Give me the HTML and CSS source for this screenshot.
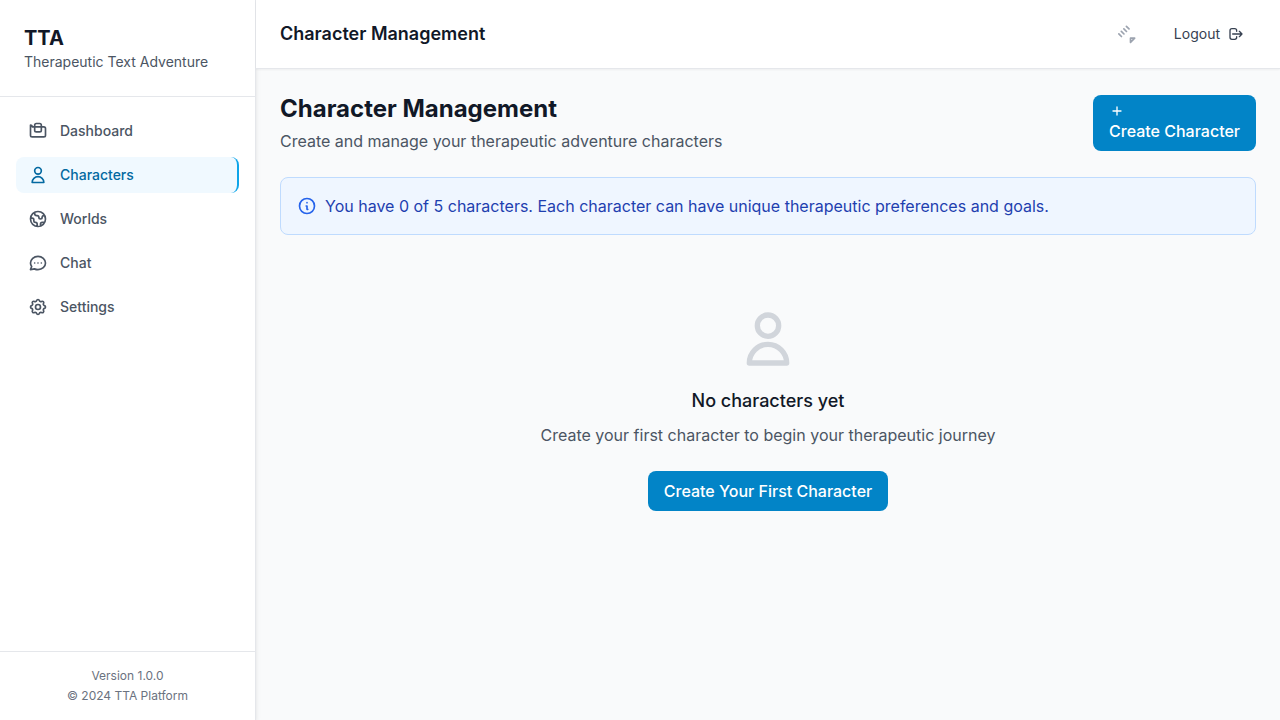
FILE: index.html
```html
<!DOCTYPE html>
<html lang="en">
<head>
<meta charset="utf-8">
<title>TTA - Character Management</title>
<link rel="stylesheet" href="styles.css">
</head>
<body>
<div class="app">
  <aside class="sidebar">
    <div class="brand">
      <h1 class="brand-name">TTA</h1>
      <p class="brand-tagline">Therapeutic Text Adventure</p>
    </div>
    <nav class="nav">
      <a class="nav-item"><svg class="icon" viewBox="0 0 24 24"><path d="M3 7v10a2 2 0 002 2h14a2 2 0 002-2V9a2 2 0 00-2-2H5a2 2 0 00-2-2z"/><path d="M8 5a2 2 0 012-2h4a2 2 0 012 2v6a2 2 0 01-2 2H10a2 2 0 01-2-2V5z"/></svg>Dashboard</a>
      <a class="nav-item active"><svg class="icon" viewBox="0 0 24 24"><path d="M16 7a4 4 0 11-8 0 4 4 0 018 0zM12 14a7 7 0 00-7 7h14a7 7 0 00-7-7z"/></svg>Characters</a>
      <a class="nav-item"><svg class="icon" viewBox="0 0 24 24"><path d="M3.055 11H5a2 2 0 012 2v1a2 2 0 002 2 2 2 0 012 2v2.945M8 3.935V5.5A2.5 2.5 0 0010.5 8h.5a2 2 0 012 2 2 2 0 104 0 2 2 0 012-2h1.064M15 20.488V18a2 2 0 012-2h3.064M21 12a9 9 0 11-18 0 9 9 0 0118 0z"/></svg>Worlds</a>
      <a class="nav-item"><svg class="icon" viewBox="0 0 24 24"><path d="M8 12h.01M12 12h.01M16 12h.01M21 12c0 4.418-4.03 8-9 8a9.863 9.863 0 01-4.255-.949L3 20l1.395-3.72C3.512 15.042 3 13.574 3 12c0-4.418 4.03-8 9-8s9 3.582 9 8z"/></svg>Chat</a>
      <a class="nav-item"><svg class="icon" viewBox="0 0 24 24"><path d="M10.325 4.317c.426-1.756 2.924-1.756 3.35 0a1.724 1.724 0 002.573 1.066c1.543-.94 3.31.826 2.37 2.37a1.724 1.724 0 001.065 2.572c1.756.426 1.756 2.924 0 3.35a1.724 1.724 0 00-1.066 2.573c.94 1.543-.826 3.31-2.37 2.37a1.724 1.724 0 00-2.572 1.065c-.426 1.756-2.924 1.756-3.35 0a1.724 1.724 0 00-2.573-1.066c-1.543.94-3.31-.826-2.37-2.37a1.724 1.724 0 00-1.065-2.572c-1.756-.426-1.756-2.924 0-3.35a1.724 1.724 0 001.066-2.573c-.94-1.543.826-3.31 2.37-2.37.996.608 2.296.07 2.572-1.065z"/><path d="M15 12a3 3 0 11-6 0 3 3 0 016 0z"/></svg>Settings</a>
    </nav>
    <footer class="sidebar-footer">
      <p>Version 1.0.0</p>
      <p>© 2024 TTA Platform</p>
    </footer>
  </aside>
  <div class="page">
    <header class="topbar">
      <h2 class="topbar-title">Character Management</h2>
      <div class="topbar-actions">
        <button class="notify" aria-label="Notifications"><svg class="icon" viewBox="0 0 24 24"><path d="M15 17h5l-5 5v-5zM10.07 2.82l3.12 3.12M7.05 5.84l3.12 3.12M4.03 8.86l3.12 3.12M1.01 11.88l3.12 3.12"/></svg></button>
        <button class="logout">Logout<svg class="icon small" viewBox="0 0 24 24"><path d="M17 16l4-4m0 0l-4-4m4 4H7m6 4v1a3 3 0 01-3 3H6a3 3 0 01-3-3V7a3 3 0 013-3h4a3 3 0 013 3v1"/></svg></button>
      </div>
    </header>
    <main class="content">
      <div class="heading">
        <div>
          <h1 class="title">Character Management</h1>
          <p class="subtitle">Create and manage your therapeutic adventure characters</p>
        </div>
        <button class="primary"><svg class="icon small" viewBox="0 0 24 24"><path d="M12 6v6m0 0v6m0-6h6m-6 0H6"/></svg>Create Character</button>
      </div>
      <div class="notice">
        <svg class="icon notice-icon" viewBox="0 0 24 24"><path d="M13 16h-1v-4h-1m1-4h.01M21 12a9 9 0 11-18 0 9 9 0 0118 0z"/></svg>
        <span>You have 0 of 5 characters. Each character can have unique therapeutic preferences and goals.</span>
      </div>
      <section class="empty">
        <svg class="icon large" viewBox="0 0 24 24"><path d="M16 7a4 4 0 11-8 0 4 4 0 018 0zM12 14a7 7 0 00-7 7h14a7 7 0 00-7-7z"/></svg>
        <h3 class="empty-title">No characters yet</h3>
        <p class="empty-text">Create your first character to begin your therapeutic journey</p>
        <button class="primary">Create Your First Character</button>
      </section>
    </main>
  </div>
</div>
</body>
</html>
```

FILE: styles.css
```css
* { box-sizing: border-box; margin: 0; padding: 0; }
body { font-family: Inter, sans-serif; font-size: 16px; line-height: 24px; color: #111827; background: #f9fafb; }
button { font: inherit; border: 0; background: transparent; text-align: left; }
.app { display: flex; height: 100vh; overflow: hidden; }
.icon { display: block; flex-shrink: 0; width: 20px; height: 20px; fill: none; stroke: currentColor; stroke-width: 2; stroke-linecap: round; stroke-linejoin: round; }
.icon.small { width: 16px; height: 16px; }
.icon.large { width: 64px; height: 64px; color: #d1d5db; }

.sidebar { display: flex; flex-direction: column; width: 256px; background: #fff; border-right: 1px solid #e5e7eb; box-shadow: 0 4px 6px -1px rgba(0, 0, 0, .1), 0 2px 4px -1px rgba(0, 0, 0, .06); }
.brand { padding: 24px; border-bottom: 1px solid #e5e7eb; }
.brand-name { font-size: 20px; line-height: 28px; font-weight: 700; }
.brand-tagline { font-size: 14px; line-height: 20px; color: #4b5563; }
.nav { flex: 1; display: flex; flex-direction: column; gap: 8px; padding: 16px; }
.nav-item { display: flex; align-items: center; gap: 12px; height: 36px; padding: 8px 12px; border-radius: 8px; font-size: 14px; line-height: 20px; font-weight: 500; color: #4b5563; }
.nav-item.active { background: #f0f9ff; color: #0369a1; border-right: 2px solid #0ea5e9; }
.sidebar-footer { padding: 16px; border-top: 1px solid #e5e7eb; display: flex; flex-direction: column; gap: 4px; text-align: center; font-size: 12px; line-height: 16px; color: #6b7280; }

.page { flex: 1; display: flex; flex-direction: column; }
.topbar { display: flex; align-items: center; justify-content: space-between; height: 69px; padding: 0 24px; background: #fff; border-bottom: 1px solid #e5e7eb; box-shadow: 0 1px 2px rgba(0, 0, 0, .05); }
.topbar-title { font-size: 18px; line-height: 28px; font-weight: 600; }
.topbar-actions { display: flex; align-items: center; gap: 16px; }
.notify { padding: 8px; color: #9ca3af; }
.logout { display: flex; align-items: center; gap: 8px; padding: 8px 12px; font-size: 14px; line-height: 20px; color: #374151; }

.content { flex: 1; display: flex; flex-direction: column; gap: 24px; padding: 24px; }
.heading { display: flex; align-items: center; justify-content: space-between; height: 60px; }
.title { font-size: 24px; line-height: 32px; font-weight: 700; }
.subtitle { margin-top: 4px; color: #4b5563; }
.primary { padding: 8px 16px; border-radius: 8px; background: #0284c7; color: #fff; font-weight: 500; }
.notice { display: flex; align-items: center; gap: 8px; height: 58px; padding: 16px; border: 1px solid #bfdbfe; border-radius: 8px; background: #eff6ff; color: #1e40af; }
.notice-icon { color: #2563eb; }
.empty { display: flex; flex-direction: column; align-items: center; padding: 48px 0; }
.empty-title { margin: 16px 0 8px; font-size: 18px; line-height: 28px; font-weight: 500; }
.empty-text { margin-bottom: 24px; color: #4b5563; }
```
